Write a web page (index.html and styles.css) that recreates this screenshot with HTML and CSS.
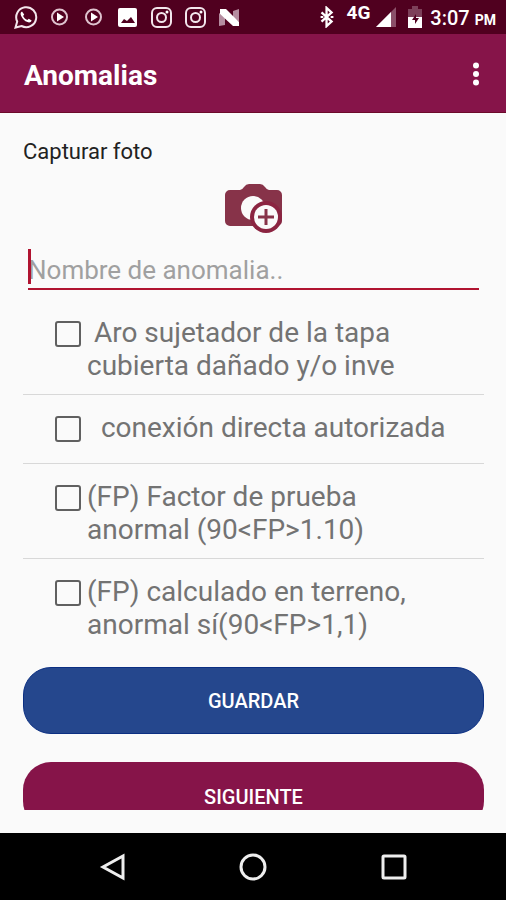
FILE: index.html
```html
<!DOCTYPE html>
<html lang="es">
<head>
<meta charset="utf-8">
<meta name="viewport" content="width=device-width, initial-scale=1">
<title>Anomalias</title>
<link rel="stylesheet" href="styles.css">
</head>
<body>
<div class="screen">
  <div class="status">
    <div class="notifications">
      <svg class="icon" viewBox="0 0 24 24"><path d="M1.500 22.500l1.700-6A10 10 0 1 1 7.500 21z" fill="none" stroke="#f3e6ec" stroke-width="2"/><path d="M8 6.500c-1.600.7-1.800 2.500-.8 4.400 1.300 2.900 3.400 5 6.300 6.200 1.900.8 3.600.1 4.200-1.600l-2.900-1.800-1.500 1.400c-1.900-.9-3.300-2.300-4.200-4.100l1.100-1.400z" fill="#fff"/></svg>
      <svg class="icon" viewBox="0 0 24 24"><circle cx="11.500" cy="12" r="7.500" fill="none" stroke="#dfc3cf" stroke-width="2"/><path d="M9 7.500l7 4.500-7 4.500z" fill="#fff"/></svg>
      <svg class="icon" viewBox="0 0 24 24"><circle cx="11.500" cy="12" r="7.500" fill="none" stroke="#dfc3cf" stroke-width="2"/><path d="M9 7.500l7 4.500-7 4.500z" fill="#fff"/></svg>
      <svg class="icon" viewBox="0 0 24 24"><rect x="2" y="3" width="19" height="19" rx="2" fill="#fff"/><path d="M5 18l3-4 3 2 4-4 4 6z" fill="#50001f"/></svg>
      <svg class="icon" viewBox="0 0 24 24"><rect x="2" y="3" width="19" height="19" rx="5" fill="none" stroke="#f3e6ec" stroke-width="2"/><circle cx="11.500" cy="12.500" r="4.500" fill="none" stroke="#f3e6ec" stroke-width="2"/><circle cx="17" cy="7" r="1.500" fill="#fff"/></svg>
      <svg class="icon" viewBox="0 0 24 24"><rect x="2" y="3" width="19" height="19" rx="5" fill="none" stroke="#f3e6ec" stroke-width="2"/><circle cx="11.500" cy="12.500" r="4.500" fill="none" stroke="#f3e6ec" stroke-width="2"/><circle cx="17" cy="7" r="1.500" fill="#fff"/></svg>
      <svg class="icon" viewBox="0 0 24 24"><path d="M1 8l6 5v7l-6 1zM21 17l-6-5V6l6-2z" fill="#b58da0"/><path d="M2 4h6l13 13v4h-6L2 9z" fill="#fff"/></svg>
    </div>
    <div class="system">
      <svg class="bluetooth" viewBox="0 0 16 24"><path d="M2 7l11 10-5.500 5V2L13 7 2 17" fill="none" stroke="#fff" stroke-width="2.500"/><path d="M1 12h3M12 12h3" stroke="#fff" stroke-width="2"/></svg>
      <span class="network">4G</span>
      <svg class="signal" viewBox="0 0 20 20"><path d="M0 20L20 0v20z" fill="#8b5069"/><path d="M0 20L15 5v15z" fill="#fff"/></svg>
      <svg class="battery" viewBox="0 0 14 22"><path d="M0 3h4V0h6v3h4v8H0z" fill="#7d4059"/><path d="M0 11h14v11H0z" fill="#fff"/><path d="M8 8l-4 6h3v4l4-6H8z" fill="#50001f"/></svg>
      <span class="clock">3:07 <small>PM</small></span>
    </div>
  </div>

  <header class="appbar">
    <h1>Anomalias</h1>
    <button class="menu" type="button" aria-label="Más opciones">
      <svg viewBox="0 0 8 24"><circle cx="4" cy="3.500" r="3"/><circle cx="4" cy="12" r="3"/><circle cx="4" cy="20.500" r="3"/></svg>
    </button>
  </header>

  <main class="content">
    <form class="form">
      <p class="caption">Capturar foto</p>
      <button class="camera" type="button" aria-label="Capturar foto">
        <svg viewBox="0 0 60 52"><path d="M6 7h10q2 0 4-3 2-3 5-3h11q3 0 5 3 2 3 4 3h8a5 5 0 0 1 5 5v26a5 5 0 0 1-5 5H6a5 5 0 0 1-5-5V12a5 5 0 0 1 5-5z" fill="#873349"/><circle cx="29" cy="25" r="12" fill="#fafafa"/><circle cx="42" cy="34" r="16" fill="#8b2441"/><circle cx="42" cy="34" r="12" fill="#fafafa"/><path d="M42 26v16M34 34h16" stroke="#873349" stroke-width="3"/></svg>
      </button>
      <div class="field">
        <input type="text" placeholder="Nombre de anomalia.." aria-label="Nombre de anomalia">
      </div>
      <ul class="list">
        <li><input type="checkbox" id="a1"><label for="a1"> Aro sujetador de la tapa cubierta dañado y/o inve</label></li>
        <li><input type="checkbox" id="a2"><label for="a2">  conexión directa autorizada</label></li>
        <li><input type="checkbox" id="a3"><label for="a3">(FP) Factor de prueba anormal (90&lt;FP&gt;1.10)</label></li>
        <li><input type="checkbox" id="a4"><label for="a4">(FP) calculado en terreno, anormal sí(90&lt;FP&gt;1,1)</label></li>
      </ul>
      <button class="action save" type="button">GUARDAR</button>
      <button class="action next" type="button">SIGUIENTE</button>
    </form>
  </main>

  <nav class="navbar">
    <button type="button" aria-label="Atrás"><svg viewBox="0 0 28 28"><path d="M24 3v22L4 14z"/></svg></button>
    <button type="button" aria-label="Inicio"><svg viewBox="0 0 28 28"><circle cx="14" cy="14" r="12"/></svg></button>
    <button type="button" aria-label="Recientes"><svg viewBox="0 0 28 28"><rect x="4" y="3" width="22" height="22" rx="1"/></svg></button>
  </nav>
</div>
</body>
</html>
```

FILE: styles.css
```css
* {
  box-sizing: border-box;
}

body {
  margin: 0;
  font-family: Roboto, "Liberation Sans", sans-serif;
  background: #fafafa;
}

button {
  font: inherit;
  border: 0;
  padding: 0;
  background: none;
}

svg {
  display: block;
}

.screen {
  display: flex;
  flex-direction: column;
  height: 100vh;
}

.status {
  display: flex;
  flex: none;
  justify-content: space-between;
  align-items: center;
  height: 34px;
  padding: 0 10px 0 14px;
  background: #50001f;
  color: #fff;
}

.notifications {
  display: flex;
  gap: 10px;
}

.icon {
  width: 24px;
  height: 24px;
}

.system {
  display: flex;
  align-items: center;
}

.bluetooth {
  width: 16px;
  height: 22px;
  margin-right: 12px;
}

.network {
  align-self: flex-start;
  margin-right: 6px;
  font-size: 19px;
  font-weight: 700;
  line-height: 18px;
}

.signal {
  width: 20px;
  height: 20px;
  margin-right: 12px;
}

.battery {
  width: 14px;
  height: 22px;
  margin-right: 8px;
}

.clock {
  padding-top: 2px;
  font-size: 20px;
  font-weight: 500;
}

.clock small {
  font-size: 14px;
  font-weight: 700;
}

.appbar {
  display: flex;
  flex: none;
  justify-content: space-between;
  align-items: center;
  height: 79px;
  padding: 4px 24px 0;
  background: #861449;
  border-bottom: 1px solid #6c0a2a;
  color: #fff;
}

.appbar h1 {
  margin: 0;
  font-size: 28px;
  font-weight: 700;
}

.menu svg {
  width: 8px;
  height: 24px;
  margin: 0 2px 2px 0;
  fill: #fff;
}

.content {
  flex: 1;
  min-height: 0;
  padding: 24px 22px 23px 23px;
}

.form {
  display: flex;
  flex-direction: column;
  height: 100%;
  overflow: hidden;
}

.form > * {
  flex: none;
}

.caption {
  margin: 0;
  font-size: 22px;
  line-height: 30px;
  color: #222;
}

.camera {
  align-self: center;
  margin-top: 16px;
}

.camera svg {
  width: 60px;
  height: 52px;
}

.field {
  position: relative;
  margin: 12px 5px 0;
  border-bottom: 2px solid #b01330;
}

.field::before {
  content: "";
  position: absolute;
  left: 0;
  top: 2px;
  width: 3px;
  height: 35px;
  background: #b01330;
}

.field input {
  display: block;
  width: 100%;
  height: 41px;
  padding: 4px 0 0;
  border: 0;
  outline: 0;
  background: none;
  font: inherit;
  font-size: 26px;
}

.field input::placeholder {
  color: #a0a0a0;
}

.list {
  margin: 10px 0 0;
  padding: 0;
  list-style: none;
}

.list li {
  display: flex;
  align-items: flex-start;
  min-height: 69px;
  padding: 16px 32px 12px;
  border-bottom: 1px solid #d8d8d8;
}

.list li:last-child {
  border-bottom: 0;
}

.list input {
  appearance: none;
  flex: none;
  width: 26px;
  height: 26px;
  margin: 5px 6px 0 0;
  border: 2px solid #606060;
  border-radius: 3px;
}

.list input:checked {
  background: #861449;
}

.list label {
  flex: 1;
  font-size: 28px;
  line-height: 33px;
  color: #737373;
  white-space: pre-wrap;
}

.action {
  height: 67px;
  border-radius: 28px;
  font-size: 20px;
  font-weight: 500;
  color: #fff;
}

.save {
  margin-top: 14px;
  background: #25478d;
  border: 1px solid #0b2f82;
}

.next {
  margin-top: 28px;
  padding-top: 2px;
  background: #861449;
}

.navbar {
  display: flex;
  flex: none;
  justify-content: center;
  align-items: center;
  gap: 112px;
  height: 67px;
  background: #000;
}

.navbar svg {
  width: 28px;
  height: 28px;
  fill: none;
  stroke: #eee;
  stroke-width: 3;
}
```
